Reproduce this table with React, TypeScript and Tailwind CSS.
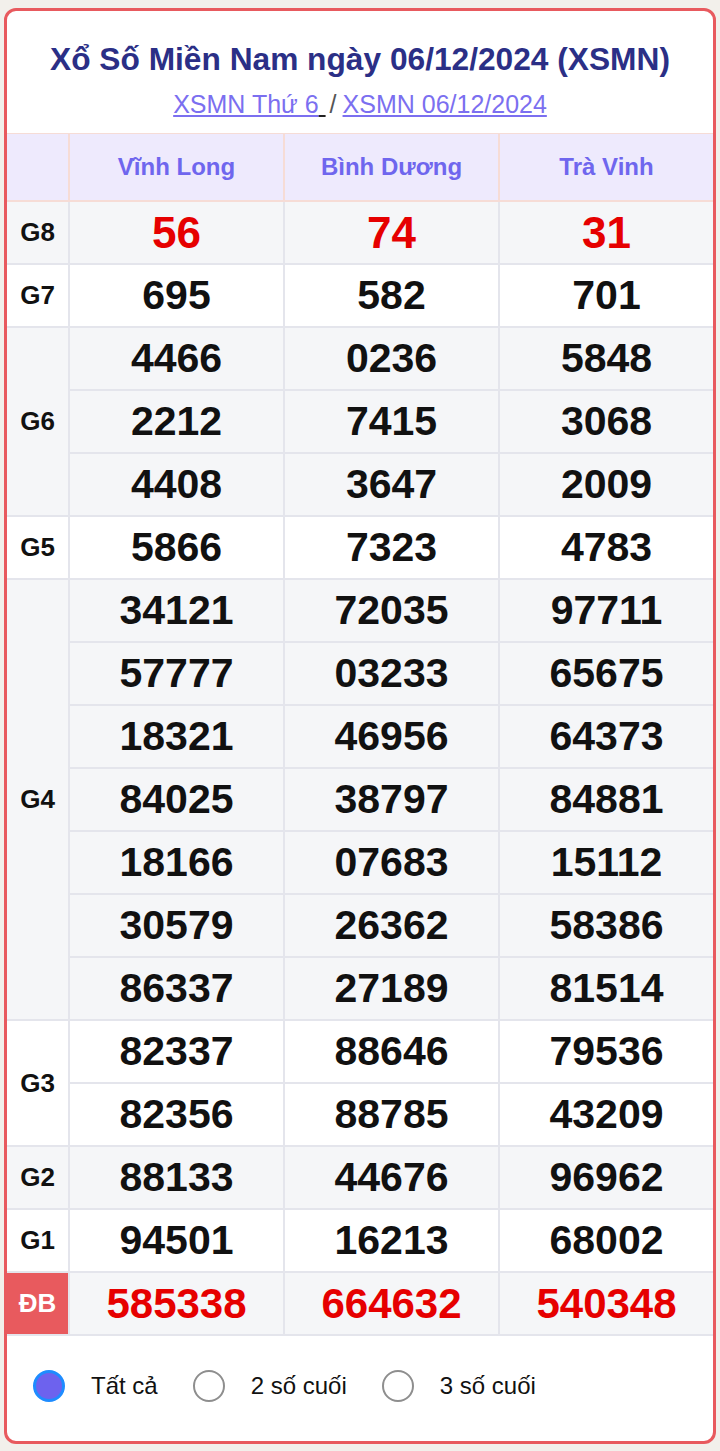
import React from "react";

type Prize = { label: string; rows: string[][]; kind?: "g8" | "db" };

const PROVINCES = ["Vĩnh Long", "Bình Dương", "Trà Vinh"];

const PRIZES: Prize[] = [
  { label: "G8", kind: "g8", rows: [["56", "74", "31"]] },
  { label: "G7", rows: [["695", "582", "701"]] },
  {
    label: "G6",
    rows: [
      ["4466", "0236", "5848"],
      ["2212", "7415", "3068"],
      ["4408", "3647", "2009"],
    ],
  },
  { label: "G5", rows: [["5866", "7323", "4783"]] },
  {
    label: "G4",
    rows: [
      ["34121", "72035", "97711"],
      ["57777", "03233", "65675"],
      ["18321", "46956", "64373"],
      ["84025", "38797", "84881"],
      ["18166", "07683", "15112"],
      ["30579", "26362", "58386"],
      ["86337", "27189", "81514"],
    ],
  },
  {
    label: "G3",
    rows: [
      ["82337", "88646", "79536"],
      ["82356", "88785", "43209"],
    ],
  },
  { label: "G2", rows: [["88133", "44676", "96962"]] },
  { label: "G1", rows: [["94501", "16213", "68002"]] },
  { label: "ĐB", kind: "db", rows: [["585338", "664632", "540348"]] },
];

const SPAN: Record<number, string> = {
  1: "row-span-1",
  2: "row-span-2",
  3: "row-span-3",
  7: "row-span-7",
};

function Radio({ checked, label }: { checked?: boolean; label: string }) {
  return (
    <label className="flex items-center gap-[26px]">
      {checked ? (
        <span className="w-[32px] h-[32px] rounded-full bg-[#6d62ee] border-[3px] border-[#1e8cff]" />
      ) : (
        <span className="w-[32px] h-[32px] rounded-full bg-white border-[2.5px] border-[#8e8e8e]" />
      )}
      <span className="text-[24px] text-[#111]">{label}</span>
    </label>
  );
}

export default function App() {
  return (
    <div className="min-h-[1451px] bg-[#f2f0eb] pt-[8px] pl-[4px] font-['Liberation_Sans',Arial,sans-serif]">
      <div className="w-[712px] h-[1436px] bg-white border-[3px] border-[#e85a5e] rounded-[12px] overflow-hidden flex flex-col">
        {/* title */}
        <div className="pt-[30px] pb-[15px] flex flex-col items-center gap-[12px]">
          <h1 className="text-[31.7px] leading-[37px] font-bold text-[#2b2f86]">
            Xổ Số Miền Nam ngày 06/12/2024 (XSMN)
          </h1>
          <div className="text-[25px] leading-[28px] text-[#7b6ff0] flex items-center">
            <a className="underline">XSMN Thứ 6</a>
            <span className="underline text-[#222]">&nbsp;</span>
            <span className="text-[#555] ml-[4px] mr-[6px]">/</span>
            <a className="underline">XSMN 06/12/2024</a>
          </div>
        </div>

        {/* header */}
        <div className="grid grid-cols-[61px_213px_213px_213px] gap-x-[2px] bg-[#f6dcd6] pt-[1px] pb-[2px]">
          <div className="h-[66px] bg-[#eeeafd]" />
          {PROVINCES.map(p => (
            <div key={p} className="h-[66px] bg-[#eeeafd] flex items-center justify-center text-[24px] font-bold text-[#6f66ee]">
              {p}
            </div>
          ))}
        </div>

        {/* body */}
        <div className="grid grid-cols-[61px_213px_213px_213px] auto-rows-[61px] gap-[2px] bg-[#e4e5ec] pb-[2px]">
          {PRIZES.map((prize, i) => {
            const bg = i % 2 === 0 ? "bg-[#f5f6f8]" : "bg-white";
            const numCls =
              prize.kind === "g8"
                ? "text-[44px] text-[#e60000]"
                : prize.kind === "db"
                ? "text-[42px] text-[#e60000]"
                : "text-[41px] text-[#111]";
            return (
              <React.Fragment key={prize.label}>
                <div
                  className={`${SPAN[prize.rows.length]} flex items-center justify-center text-[26px] font-bold ${
                    prize.kind === "db" ? "bg-[#e85a5e] text-white" : `${bg} text-[#111]`
                  }`}
                >
                  {prize.label}
                </div>
                {prize.rows.map((row, r) => (
                  <React.Fragment key={r}>
                    {row.map((n, c) => (
                      <div key={c} className={`${bg} flex items-center justify-center font-bold leading-none ${numCls}`}>
                        {n}
                      </div>
                    ))}
                  </React.Fragment>
                ))}
              </React.Fragment>
            );
          })}
        </div>

        {/* filter */}
        <div className="flex-1 flex items-center pl-[26px] pb-[6px] gap-[35px]">
          <Radio checked label="Tất cả" />
          <Radio label="2 số cuối" />
          <Radio label="3 số cuối" />
        </div>
      </div>
    </div>
  );
}
